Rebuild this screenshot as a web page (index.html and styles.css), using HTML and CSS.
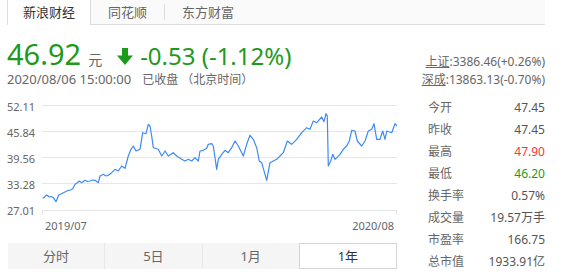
FILE: index.html
```html
<!DOCTYPE html>
<html lang="zh-CN">
	<head>
		<meta charset="utf-8"/>
		<title>行情</title>
		<link rel="stylesheet" href="styles.css">
	</head>
	<body>
		<div class="head">
			<div class="tabs flex">
				<div class="tab active">新浪财经</div>
				<div class="tab">同花顺</div>
				<div class="tab sep">东方财富</div>
			</div>
			<div class="quote flex">
				<div>
					<div class="price flex">
						<span class="now">46.92</span>
						<span class="unit">元</span>
						<svg class="arrow" width="16" height="17" viewBox="0 0 16 17">
							<polygon points="5,0 11,0 11,7.5 16,7.5 8,17 0,7.5 5,7.5" fill="#1d9a1d"/>
						</svg>
						<span class="chg">-0.53 (-1.12%)</span>
					</div>
					<div class="time"><span class="stamp">2020/08/06 15:00:00</span><span class="closed">已收盘 （北京时间）</span></div>
				</div>
				<div class="index">
					<div><u>上证</u>:3386.46(+0.26%)</div>
					<div><u>深成</u>:13863.13(-0.70%)</div>
				</div>
			</div>
		</div>
		<div class="main flex">
			<div class="left">
				<svg class="chart" width="397" height="137" viewBox="0 95 397 137">
					<g stroke="#e6e6e6" stroke-width="1">
						<line x1="42" y1="104.5" x2="397" y2="104.5"/>
						<line x1="42" y1="130.5" x2="397" y2="130.5"/>
						<line x1="42" y1="156.5" x2="397" y2="156.5"/>
						<line x1="42" y1="182.5" x2="397" y2="182.5"/>
						<line x1="42" y1="209.5" x2="397" y2="209.5"/>
						<line x1="42.5" y1="209" x2="42.5" y2="214"/>
						<line x1="396.5" y1="209" x2="396.5" y2="214"/>
					</g>
					<g class="axis" text-anchor="end">
						<text x="35" y="110">52.11</text>
						<text x="35" y="136">45.84</text>
						<text x="35" y="162">39.56</text>
						<text x="35" y="188">33.28</text>
						<text x="35" y="214">27.01</text>
						<text x="394" y="229">2020/08</text>
					</g>
					<text class="axis" x="45" y="229">2019/07</text>
					<polyline fill="none" stroke="#3d8af7" stroke-width="1.2" stroke-linejoin="round" points="
						42.7,197.3 44.5,196 46.7,194 49.3,196 51,195.5 53.3,196.7 56,200.7 57.5,197 58.7,194 61,193
						63.3,191.7 66,190.5 68.3,189.3 70.5,189 72.7,187.7 75,183.3 77,182 79.3,180 81.7,181.7 85,179.3
						87.5,180.5 90,180 92.5,179 95,179.3 98.3,181.7 100,175 103.3,173.3 106,175 108.3,174.3 111.7,171.7
						115,168.3 118.3,170 121.7,165 125,167.3 128.3,155 131,148.3 133.3,145 136,150 140,148.3 142.7,131.7
						146,132.7 148.3,123.3 150,125 151.7,135 153.3,146.7 158.3,148.3 161.7,155 165,150 168.3,155 173.3,151.7
						176.7,155 181.7,158.3 185,160 188.3,158.3 191.7,160 195,156.7 198.3,160 200,150 203.3,149.3 206.7,147.3
						208.3,143.3 211.7,142.7 213.3,145 216.7,168.3 218.3,158.3 221.7,153.3 225,149.3 228.3,151.7 231.7,146.7
						235,140 238.3,145 243.3,155 246.7,143.3 250,134.3 253.3,138.3 256.7,146.7 259.3,160 261.7,161.7
						266.7,179.3 270,161.7 273.3,160 276.7,158.3 280,155 283.3,151.7 287.3,140 291.7,143.3 296.7,138.3
						301.7,131.7 306.7,126.7 310,128.3 313.3,120 316.7,121.7 321.7,116 324,120.7 326,112.7 327.3,115
						328.3,165 330.7,160 332.7,153.3 335,158.3 340,153.3 343.3,148.3 346.7,145 349.3,140 351.7,129.3
						355,130 357.3,140 361.7,145 365,140 368.3,130 371.7,128.3 374,122.7 376.7,138.3 380,138.3 382.7,130
						385,138.3 386.7,130 391.7,131.7 395,122.7 397,125"/>
				</svg>
				<div class="periods flex">
					<div>分时</div>
					<div>5日</div>
					<div>1月</div>
					<div class="on">1年</div>
				</div>
			</div>
			<div class="stats">
				<div class="row"><span>今开</span><span class="val">47.45</span></div>
				<div class="row"><span>昨收</span><span class="val">47.45</span></div>
				<div class="row"><span>最高</span><span class="val up">47.90</span></div>
				<div class="row"><span>最低</span><span class="val down">46.20</span></div>
				<div class="row"><span>换手率</span><span class="val">0.57%</span></div>
				<div class="row"><span>成交量</span><span class="val">19.57万手</span></div>
				<div class="row"><span>市盈率</span><span class="val">166.75</span></div>
				<div class="row"><span>总市值</span><span class="val">1933.91亿</span></div>
			</div>
		</div>
	</body>
</html>
```

FILE: styles.css
```css
html, body {
	padding: 0; border: 0; margin: 0;
	background: #fff;
	font-family: "Noto Sans", "Noto Sans CJK SC", sans-serif;
	color: #666;
}
.flex {
	display: flex;
}

.head {
	padding: 0 17px 0 7px;
}
.tabs {
	height: 24px;
	background: #fafafa;
	border-bottom: 1px solid #ddd;
	font-size: 13px;
}
.tab {
	padding: 0 17px;
	line-height: 24px;
}
.tab.active {
	height: 25px;
	padding: 0 15px;
	background: #fff;
	color: #333;
	border-left: 1px solid #ddd;
	border-right: 1px solid #ddd;
}
.tab.sep {
	height: 16px;
	margin-top: 4px;
	line-height: 16px;
	border-left: 1px solid #ddd;
}

.quote {
	justify-content: space-between;
	align-items: flex-end;
	margin-top: 12px;
}
.price {
	align-items: baseline;
	height: 33px;
	line-height: 33px;
}
.now {
	font-size: 29px;
	color: #1d9a1d;
}
.unit {
	font-size: 14px;
	margin-left: 7px;
}
.arrow {
	margin: 0 7px 0 15px;
}
.chg {
	font-size: 24px;
	color: #1d9a1d;
}
.time {
	font-size: 12px;
	line-height: 18px;
}
.stamp {
	font-size: 13px;
}
.closed {
	margin-left: 11px;
}
.index {
	font-size: 12px;
	line-height: 18px;
	text-align: right;
}

.main {
	margin-top: 7px;
}
.left {
	width: 397px;
}
.chart {
	display: block;
}
.axis, .axis text {
	font-size: 11px;
	fill: #666;
}
.periods {
	height: 26px;
	margin: 10px 0 0 8px;
	background: #f5f5f5;
	font-size: 13px;
}
.periods div {
	flex: 1;
	text-align: center;
	line-height: 26px;
	border-left: 1px solid #e8e8e8;
}
.periods div:first-child {
	border-left: none;
}
.periods .on {
	background: #fff;
	color: #333;
	border: 1px solid #d4d4d4;
	line-height: 24px;
}

.stats {
	width: 117px;
	margin-left: 31px;
	padding-top: 1px;
	font-size: 12px;
}
.row {
	display: flex;
	justify-content: space-between;
	height: 22px;
	line-height: 22px;
}
.val {
	color: #555;
}
.up {
	color: #f33;
}
.down {
	color: #1d9a1d;
}
```
